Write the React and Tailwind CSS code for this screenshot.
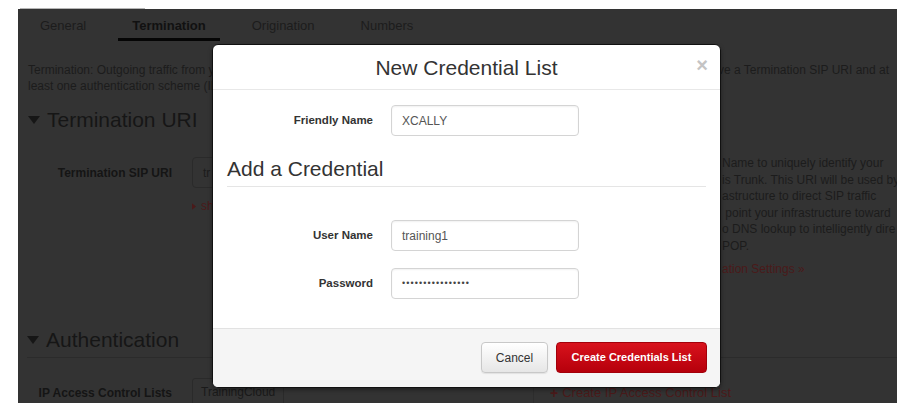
const TABS = [
  { id: 'general', label: 'General' },
  { id: 'termination', label: 'Termination' },
  { id: 'origination', label: 'Origination' },
  { id: 'numbers', label: 'Numbers' },
]

// fragments of the help text that stay visible to the right of the modal
const HELP_LINES = [
  'Name to uniquely identify your',
  'is Trunk. This URI will be used by',
  'astructure to direct SIP traffic',
  ' point your infrastructure toward',
  'o DNS lookup to intelligently dire',
  'POP.',
]

function Caret({ className = '' }) {
  return (
    <svg viewBox="0 0 12 8" className={className} aria-hidden>
      <path d="M0 0h12L6 8z" fill="currentColor" />
    </svg>
  )
}

function Field({ label, children }) {
  return (
    <div className="flex items-center">
      <label className="w-[160px] text-right text-[11.5px] font-bold text-[#333]">{label}</label>
      <div className="ml-[18px] w-[188px] h-[31px] rounded-[4px] border border-[#d4d4d4] bg-white shadow-[inset_0_1px_2px_rgba(0,0,0,0.06)] flex items-center px-[10px] text-[12px] text-[#555]">
        {children}
      </div>
    </div>
  )
}

function CredentialModal() {
  return (
    <div className="absolute left-[194px] top-[35px] w-[509px] h-[344px] bg-white rounded-[6px] border border-[#111] shadow-[0_2px_4px_rgba(0,0,0,0.35)] flex flex-col overflow-hidden">
      {/* Header */}
      <div className="relative h-[45px] flex-shrink-0 border-b border-[#e8e8e8] flex items-center justify-center">
        <h3 className="text-[21px] font-light text-[#333] leading-none">New Credential List</h3>
        <span className="absolute right-[12px] top-[10px] text-[20px] font-bold leading-none text-[#c4c4c4]">×</span>
      </div>

      {/* Body */}
      <div className="flex-1 pt-[15px]">
        <Field label="Friendly Name">XCALLY</Field>

        <div className="mx-[14px] mt-[19px] border-b border-[#e5e5e5] pb-[3px]">
          <h4 className="text-[21px] font-light leading-[28px] text-[#333]">Add a Credential</h4>
        </div>

        <div className="mt-[33px] flex flex-col gap-[17px]">
          <Field label="User Name">training1</Field>
          <Field label="Password">
            <span className="text-[9px] tracking-[1.1px] text-[#444]">••••••••••••••••</span>
          </Field>
        </div>
      </div>

      {/* Footer */}
      <div className="h-[59px] flex-shrink-0 border-t border-[#e2e2e2] bg-[#f5f5f5] flex items-start justify-end gap-[8px] pt-[13px] pr-[13px]">
        <button className="w-[67px] h-[31px] rounded-[4px] border border-[#c8c8c8] bg-gradient-to-b from-white to-[#e6e6e6] shadow-[0_1px_1px_rgba(0,0,0,0.08)] text-[12px] text-[#333]">
          Cancel
        </button>
        <button className="w-[151px] h-[31px] rounded-[4px] border border-[#a3000a] bg-gradient-to-b from-[#d8121c] to-[#b6000b] text-[11px] font-bold text-white">
          Create Credentials List
        </button>
      </div>
    </div>
  )
}

export default function App() {
  return (
    <div className="w-[922px] h-[416px] bg-white pt-[8px] pl-[18px] font-['Liberation_Sans',Arial,sans-serif]">
      <div className="ml-[2px] w-[125px] h-px bg-[#b5b5b5]" />

      <div className="relative w-[879px] h-[394px] overflow-hidden bg-[#333333] text-[#181818]">
        {/* Tabs */}
        <div className="flex gap-[18px] pl-[8px]">
          {TABS.map(({ id, label }) => {
            const active = id === 'termination'
            return (
              <div
                key={id}
                className={`h-[32px] px-[14px] pt-[9px] leading-[16px] text-[13px] border-b-[3px] ${
                  active ? 'border-[#050505] font-bold text-[#111]' : 'border-transparent text-[#1c1c1c]'
                }`}
              >
                {label}
              </div>
            )
          })}
        </div>

        {/* Intro */}
        <div className="mt-[21px] pl-[10px] pr-[8px] flex justify-between text-[12px] leading-[16px] text-[#1c1c1c]">
          <p>
            Termination: Outgoing traffic from your
            <br />
            least one authentication scheme (IP
          </p>
          <p>ve a Termination SIP URI and at</p>
        </div>

        {/* Termination URI */}
        <div className="mt-[12px] px-[10px] flex items-center gap-[7px] text-[21px] leading-[28px] text-[#161616]">
          <Caret className="w-[12px] h-[8px]" />
          <span>Termination URI</span>
        </div>

        <div className="mt-[21px] flex">
          <div className="w-[690px] flex-shrink-0 pl-[10px]">
            <div className="flex items-center mt-[2px]">
              <span className="w-[144px] text-right text-[12px] font-bold text-[#151515]">Termination SIP URI</span>
              <div className="ml-[20px] w-[60px] h-[31px] rounded-[4px] border border-[#2a2a2a] flex items-center px-[10px] text-[12px] text-[#1c1c1c] overflow-hidden">
                tr
              </div>
            </div>
            <div className="ml-[164px] mt-[9px] flex items-center gap-[5px] text-[12px] text-[#4a1a1a]">
              <svg viewBox="0 0 5 8" className="w-[4px] h-[7px]" aria-hidden>
                <path d="M0 0l5 4-5 4z" fill="currentColor" />
              </svg>
              <span>show</span>
            </div>
          </div>
          <div className="pl-[14px] whitespace-pre text-[12px] leading-[16.6px] text-[#1c1c1c]">
            {HELP_LINES.map((line) => (
              <div key={line}>{line}</div>
            ))}
            <div className="mt-[6px] text-[#4a1a1a]">ation Settings »</div>
          </div>
        </div>

        {/* Authentication */}
        <div className="mt-[49px] ml-[9px] flex items-center gap-[7px] pb-[3px] border-b border-[#2b2b2b] text-[21px] leading-[28px] text-[#161616]">
          <Caret className="w-[12px] h-[8px]" />
          <span>Authentication</span>
        </div>

        <div className="flex items-start">
          <div className="w-[516px] flex-shrink-0 pl-[10px] pt-[20px] flex items-start border-r border-[#2d2d2d] h-[60px]">
            <span className="w-[144px] mt-[6px] text-right text-[12px] font-bold text-[#151515]">IP Access Control Lists</span>
            <div className="ml-[20px] px-[8px] h-[28px] rounded-[3px] border border-[#2a2a2a] flex items-center text-[12px] text-[#1a1a1a]">
              TrainingCloud
            </div>
          </div>
          <div className="pl-[16px] pt-[25px] flex items-center gap-[4px] text-[13px] text-[#4a1a1a]">
            <span className="font-bold text-[14px] leading-none">+</span>
            <span>Create IP Access Control List</span>
          </div>
        </div>

        <CredentialModal />
      </div>
    </div>
  )
}
